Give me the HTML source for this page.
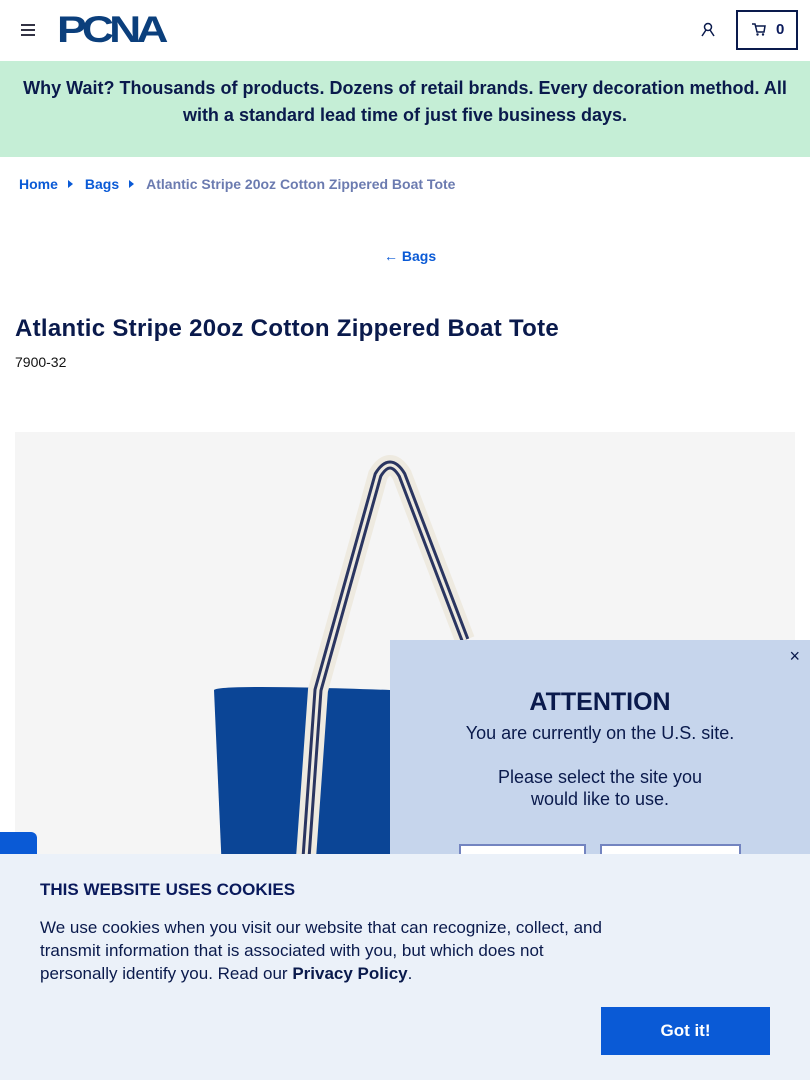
<!DOCTYPE html>
<html><head><meta charset="utf-8"><style>
*{margin:0;padding:0;box-sizing:border-box}
body{width:810px;height:1080px;overflow:hidden;position:relative;font-family:"Liberation Sans",sans-serif;background:#fff;color:#0a1a5c}
.hdr{height:61px;position:relative}
.banner{position:absolute;top:61px;left:0;width:810px;height:96px;background:#c5eed6;text-align:center;font-weight:bold;font-size:18px;line-height:27px;padding-top:14px;color:#0a1a4c}
.crumb{position:absolute;top:176px;left:19px;font-size:14px;font-weight:bold;color:#0a5ad6}
.crumb span.g{color:#6b7bb0}
.tri{display:inline-block;width:0;height:0;border-left:5px solid #0a5ad6;border-top:4px solid transparent;border-bottom:4px solid transparent;margin:0 12px 1px 10px}
.back{position:absolute;top:248px;left:384px;font-size:14px;font-weight:bold;color:#0a5ad6}
h1{position:absolute;top:315px;left:15px;font-size:24px;color:#0a1a4c;letter-spacing:0.3px}
.sku{position:absolute;top:354px;left:15px;font-size:14px;color:#111}
.img{position:absolute;top:432px;left:15px;width:780px;height:440px;background:#f5f5f5;overflow:hidden}
.pop{position:absolute;top:640px;left:390px;width:420px;height:230px;background:#c6d5ec;text-align:center;color:#0a1a4c}
.ck{position:absolute;top:854px;left:0;width:810px;height:226px;background:#ebf1f9}
</style></head><body>
<div class="hdr">
 <div style="position:absolute;left:21px;top:24px;width:14px;height:2px;background:#334;box-shadow:0 5px 0 #334,0 10px 0 #334"></div>
 <div style="position:absolute;left:57px;top:9px;font:900 37px 'Liberation Sans',sans-serif;color:#0b3f7c;letter-spacing:-4px;transform:scaleX(1.2);transform-origin:left">PCNA</div>
 <svg style="position:absolute;left:700px;top:22px" width="16" height="16" viewBox="0 0 16 16"><circle cx="8" cy="5" r="3.5" fill="none" stroke="#0a1a4c" stroke-width="1.5"/><path d="M6 8 L2 14 M10 8 L14 14" stroke="#0a1a4c" stroke-width="1.5"/></svg>
 <div style="position:absolute;left:736px;top:10px;width:62px;height:40px;border:2px solid #0a1a4c;font-weight:bold;font-size:15px;padding:9px 0 0 38px">0</div>
 <svg style="position:absolute;left:752px;top:23px" width="14" height="13" viewBox="0 0 14 13"><path d="M0 1H3L5 9H12L13 3H4" fill="none" stroke="#0a1a4c" stroke-width="1.5"/><circle cx="5.5" cy="11.5" r="1.2" fill="#0a1a4c"/><circle cx="11" cy="11.5" r="1.2" fill="#0a1a4c"/></svg>
</div>
<div class="banner">Why Wait? Thousands of products. Dozens of retail brands. Every decoration method. All<br>with a standard lead time of just five business days.</div>
<div class="crumb">Home<span class="tri"></span>Bags<span class="tri"></span><span class="g">Atlantic Stripe 20oz Cotton Zippered Boat Tote</span></div>
<div class="back">← Bags</div>
<h1>Atlantic Stripe 20oz Cotton Zippered Boat Tote</h1>
<div class="sku">7900-32</div>
<div class="img">
 <svg width="780" height="440" viewBox="15 432 780 440">
  <path d="M214 690 Q220 684 390 690 L390 872 L222 872 Z" fill="#0b4596"/>
  <path d="M305 872 L318 690 L378 475 Q390 455 402 475 L465 640" fill="none" stroke="#eeeae0" stroke-width="20"/>
  <path d="M305 872 L318 690 L378 475 Q390 455 402 475 L465 640" fill="none" stroke="#2a3560" stroke-width="9"/>
  <path d="M305 872 L318 690 L378 475 Q390 455 402 475 L465 640" fill="none" stroke="#eeeae0" stroke-width="3"/>
 </svg>
</div>
<div class="pop">
 <div style="position:absolute;right:10px;top:6px;font-size:18px">×</div>
 <div style="font-weight:bold;font-size:25px;margin-top:48px">ATTENTION</div>
 <div style="font-size:18px;margin-top:5px;line-height:22px">You are currently on the U.S. site.<br><br>Please select the site you<br>would like to use.</div>
 <div style="position:absolute;left:69px;top:204px;width:127px;height:30px;border:2px solid #7384c0;background:#fff"></div>
 <div style="position:absolute;left:210px;top:204px;width:141px;height:30px;border:2px solid #7384c0;background:#fff"></div>
</div>
<div style="position:absolute;left:0;top:832px;width:37px;height:30px;background:#0a5ad6;border-radius:0 6px 0 0"></div>
<div class="ck">
 <div style="position:absolute;left:40px;top:26px;font-weight:bold;font-size:17px">THIS WEBSITE USES COOKIES</div>
 <div style="position:absolute;left:40px;top:62px;width:570px;font-size:17px;line-height:23px;color:#0a1a4c">We use cookies when you visit our website that can recognize, collect, and transmit information that is associated with you, but which does not personally identify you. Read our <b>Privacy Policy</b>.</div>
 <div style="position:absolute;left:601px;top:153px;width:169px;height:48px;background:#0a5ad6;color:#fff;font-weight:bold;font-size:17px;text-align:center;line-height:48px">Got it!</div>
</div>
</body></html>
